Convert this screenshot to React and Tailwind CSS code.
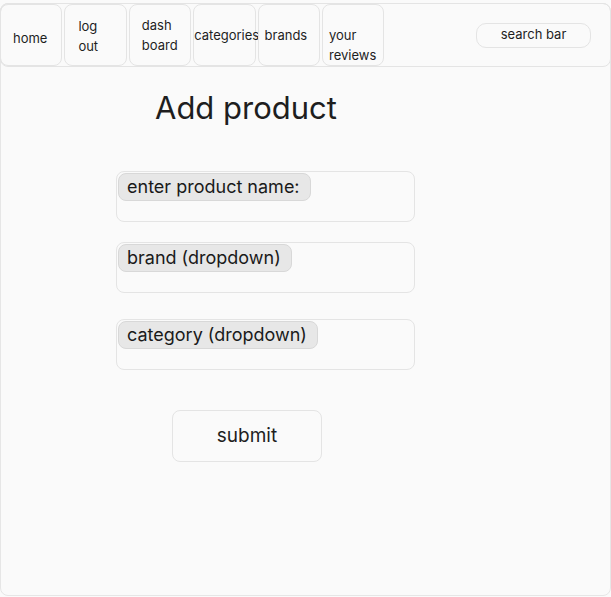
import React from "react";

const navItems = [
  { lines: ["home"], cls: "-ml-px pl-[12px] pt-[6px]" },
  { lines: ["log", "out"], cls: "pl-[13px] pt-[2px]" },
  { lines: ["dash", "board"], cls: "pl-[12px] pb-[1px]" },
  { lines: ["categories"], cls: "pl-0" },
  { lines: ["brands"], cls: "pl-[6px]" },
  { lines: ["your", "reviews"], cls: "pl-[6px] pt-[19px]" },
];

function Field({ label, className = "" }) {
  return (
    <div className={"ml-[115px] w-[299px] h-[51px] rounded-lg border border-[#e4e4e4] p-px " + className}>
      <div className="inline-flex items-center h-[28px] pl-[8px] pr-[10px] rounded-lg bg-[#e7e7e7] border border-[#d8d8d8] text-[18px] leading-none text-[#1a1a1a]">
        {label}
      </div>
    </div>
  );
}

export default function App() {
  return (
    <div className="w-[611px] h-[597px] bg-[#fafafa] pt-[3px] font-['Inter',sans-serif] text-[#1e1e1e]">
      <div className="h-[593px] rounded-lg border border-[#e6e6e6] flex flex-col">
        <div className="h-[64px] -m-px rounded-lg border border-[#e4e4e4] flex gap-[2px]">
          {navItems.map((it, i) => (
            <div
              key={i}
              className={"w-[62.4px] h-full rounded-lg border border-[#e4e4e4] flex flex-col justify-center text-[13px] leading-[20px] whitespace-nowrap " + it.cls}
            >
              {it.lines.map((l) => (
                <span key={l}>{l}</span>
              ))}
            </div>
          ))}
          <div className="ml-auto mr-[19px] mt-[19px] w-[115px] h-[25px] rounded-[10px] border border-[#e4e4e4] flex items-center justify-center text-[13px] leading-none pb-[3px]">
            search bar
          </div>
        </div>

        <h1 className="ml-[154px] mt-[22px] text-[31px] leading-[40px]">Add product</h1>

        <Field label="enter product name:" className="mt-[43px]" />
        <Field label="brand (dropdown)" className="mt-[20px]" />
        <Field label="category (dropdown)" className="mt-[26px]" />

        <div className="ml-[171px] mt-[40px] w-[150px] h-[52px] rounded-lg border border-[#e4e4e4] flex items-center justify-center text-[19px]">
          submit
        </div>
      </div>
    </div>
  );
}
